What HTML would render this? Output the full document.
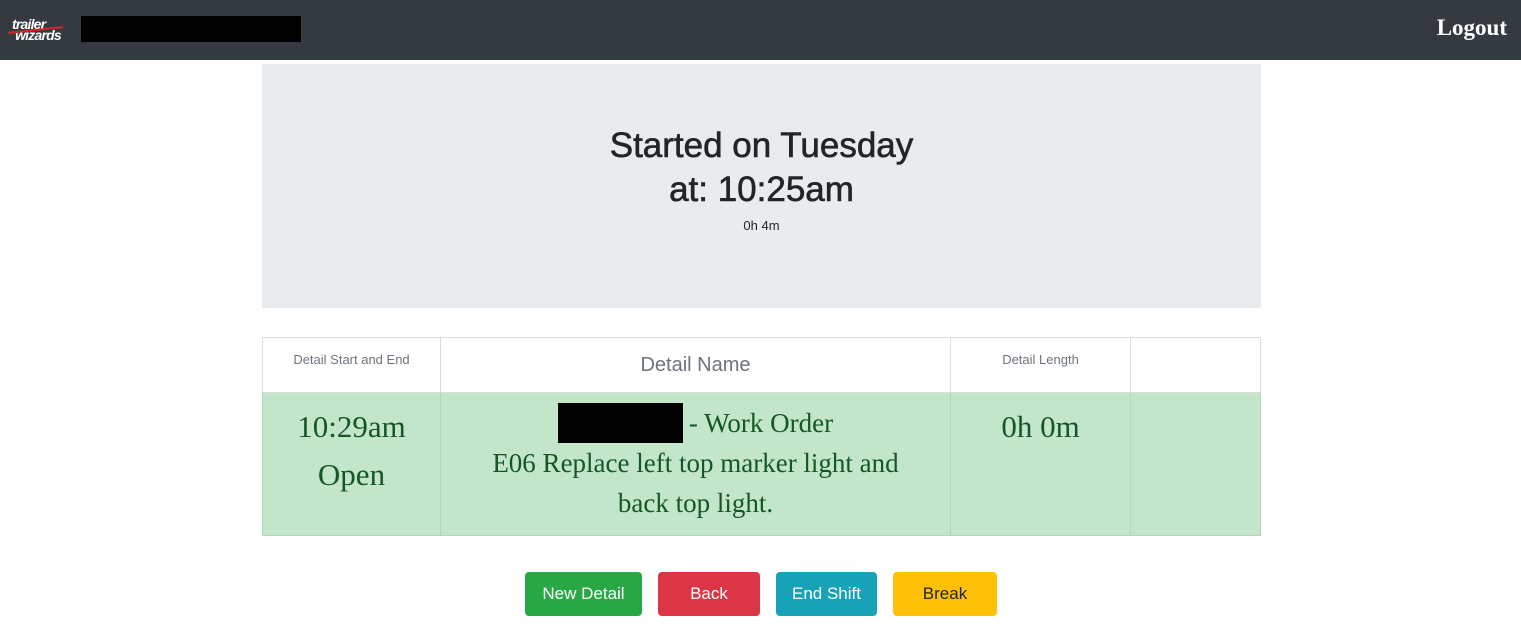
<!DOCTYPE html>
<html><head><style>
body{margin:0;width:1521px;height:632px;background:#fff;font-family:"Liberation Sans",sans-serif;overflow:hidden;position:relative}
.nav{position:absolute;left:0;top:0;width:1521px;height:60px;background:#343a40}
.abs{position:absolute}
.jumbo{position:absolute;left:262px;top:64px;width:999px;height:244px;background:#e9ecef;text-align:center;color:#212529}
table{position:absolute;left:262px;top:337px;width:999px;border-collapse:collapse}
td,th{border:1px solid #dcdcdc;text-align:center;vertical-align:top;padding:0}
.row td{background:#c3e6cb;border-color:#b1d6b9;font-family:"Liberation Serif",serif;color:#155724}
.btn{position:absolute;top:572px;height:44px;border-radius:4px;color:#fff;font-size:17px;line-height:44px;text-align:center}
</style></head><body>
<div class="nav">
<div class="abs" style="left:12px;top:19px;color:#fff;font-weight:bold;font-style:italic;font-size:14px;line-height:11px;letter-spacing:-0.8px">trailer<br>&nbsp;wizards</div>
<div class="abs" style="left:8px;top:29px;width:55px;height:2px;background:#d22;transform:rotate(-6deg)"></div>
<div class="abs" style="left:81px;top:16px;width:220px;height:26px;background:#000"></div>
<div class="abs" style="right:14px;top:15px;color:#fff;font-family:'Liberation Serif',serif;font-weight:bold;font-size:23px">Logout</div>
</div>
<div class="jumbo">
<div style="position:absolute;top:60px;width:100%;font-size:35px;line-height:44px;-webkit-text-stroke:0.6px #212529">Started on Tuesday<br>at: 10:25am</div>
<div style="position:absolute;top:154px;width:100%;font-size:13px">0h 4m</div>
</div>
<table>
<tr style="height:55px;color:#6c757d;font-weight:normal">
<th style="width:177px;font-size:13px;font-weight:normal;padding-top:14px">Detail Start and End</th>
<th style="width:509px;font-size:20px;font-weight:normal;padding-top:16px">Detail Name</th>
<th style="width:179px;font-size:13px;font-weight:normal;padding-top:14px">Detail Length</th>
<th style="font-weight:normal"></th></tr>
<tr class="row" style="height:143px">
<td style="font-size:31px;line-height:48px;padding-top:10px">10:29am<br>Open</td>
<td style="font-size:27px;line-height:40px;padding-top:10px"><span style="display:inline-block;width:125px;height:40px;background:#000;vertical-align:top;margin-right:6px"></span>- Work Order<br>E06 Replace left top marker light and<br>back top light.</td>
<td style="font-size:31px;padding-top:16px">0h 0m</td>
<td></td></tr>
</table>
<div class="btn" style="left:525px;width:117px;background:#28a745">New Detail</div>
<div class="btn" style="left:658px;width:102px;background:#dc3545">Back</div>
<div class="btn" style="left:776px;width:101px;background:#17a2b8">End Shift</div>
<div class="btn" style="left:893px;width:104px;background:#ffc107;color:#212529">Break</div>
</body></html>
